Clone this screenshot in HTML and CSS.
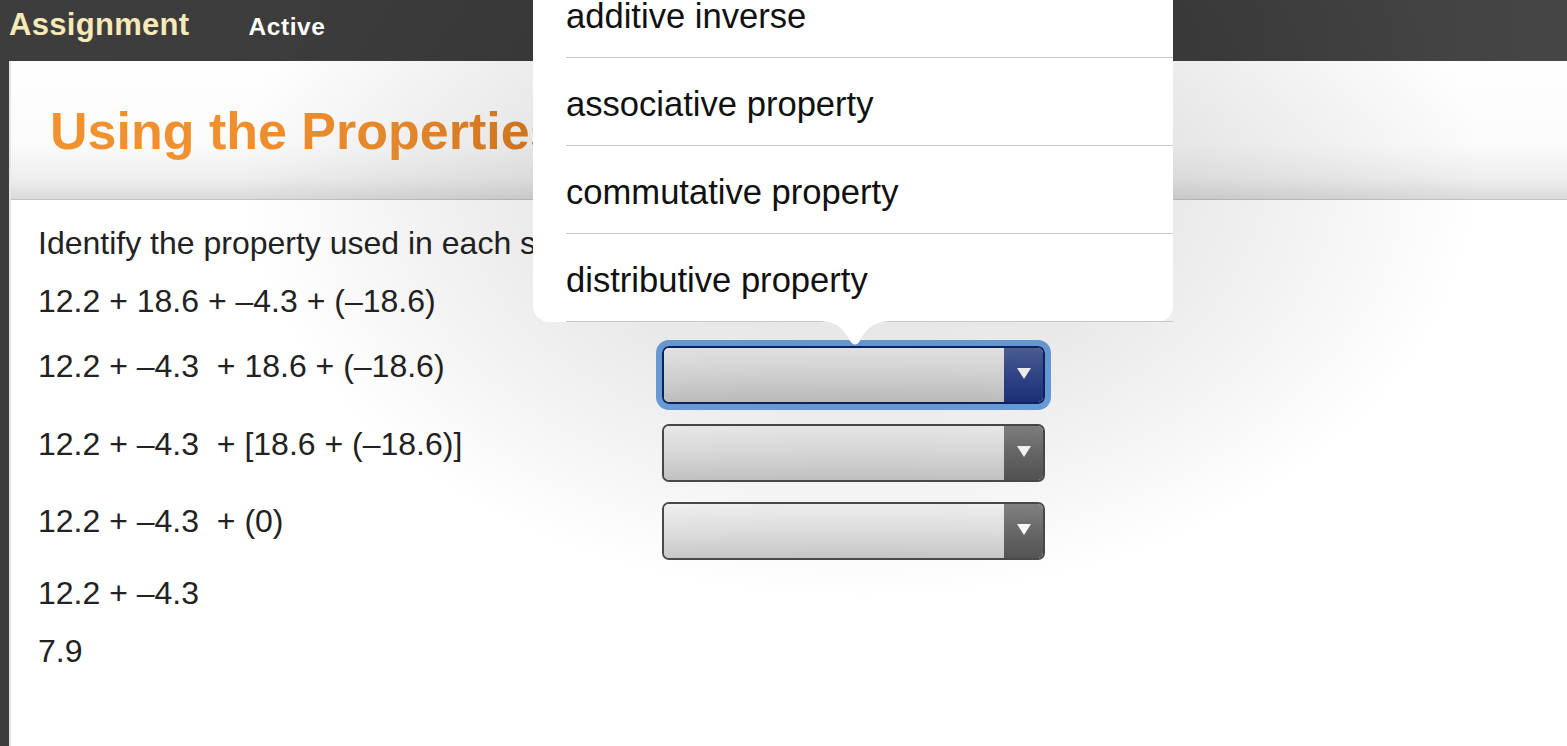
FILE: index.html
```html
<!DOCTYPE html>
<html lang="en">
<head>
<meta charset="utf-8">
<title>Assignment</title>
<link rel="stylesheet" href="styles.css">
</head>
<body>
  <header class="topbar">
    <span class="brand">Assignment</span>
    <span class="status">Active</span>
  </header>
  <main class="sheet">
    <div class="titlebar">
      <h1 class="title">Using the Properties</h1>
    </div>
    <section class="work">
      <p class="prompt">Identify the property used in each step.</p>
      <div class="row r1"><span class="expr">12.2 + 18.6 + –4.3 + (–18.6)</span></div>
      <div class="row r2">
        <span class="expr">12.2 + –4.3  + 18.6 + (–18.6)</span>
        <div class="select focused"><div class="select-field"></div><div class="select-btn"><span class="tri"></span></div></div>
      </div>
      <div class="row r3">
        <span class="expr">12.2 + –4.3  + [18.6 + (–18.6)]</span>
        <div class="select"><div class="select-field"></div><div class="select-btn"><span class="tri"></span></div></div>
      </div>
      <div class="row r4">
        <span class="expr">12.2 + –4.3  + (0)</span>
        <div class="select"><div class="select-field"></div><div class="select-btn"><span class="tri"></span></div></div>
      </div>
      <div class="row r5"><span class="expr">12.2 + –4.3</span></div>
      <div class="row r6"><span class="expr">7.9</span></div>
    </section>
  </main>

  <div class="scrim" aria-hidden="true"></div>

  <div class="popover">
    <ul class="options">
      <li class="option">additive inverse</li>
      <li class="option">associative property</li>
      <li class="option">commutative property</li>
      <li class="option">distributive property</li>
    </ul>
    <svg class="pointer" width="76" height="27" viewBox="0 0 76 27" aria-hidden="true">
      <path d="M0 0 C18 0 26 6 33 20 Q38 27 43 20 C50 6 58 0 76 0 Z" fill="#ffffff"/>
    </svg>
  </div>
</body>
</html>
```
FILE: styles.css
```css
* { box-sizing: border-box; }

html, body {
  margin: 0;
  padding: 0;
  height: 100%;
  overflow: hidden;
}

body {
  background: #3d3d3d;
  font-family: "Liberation Sans", Arial, Helvetica, sans-serif;
  color: #222;
  position: relative;
}

.topbar {
  height: 61px;
  background: linear-gradient(to right, #3d3d3d 0%, #3b3b3b 70%, #464646 100%);
  display: flex;
  align-items: center;
  padding-left: 9px;
  padding-bottom: 12px;
}

.brand {
  font-weight: bold;
  font-size: 31px;
  letter-spacing: 0.3px;
  color: #f8e9b8;
}

.status {
  font-weight: bold;
  font-size: 24.5px;
  letter-spacing: 0.6px;
  color: #ffffff;
  margin-left: 59px;
  margin-top: 4px;
}

.sheet {
  margin-left: 9px;
  background: #ffffff;
  border-left: 2px solid #e6e6e6;
  height: calc(100% - 61px);
}

.titlebar {
  height: 139px;
  background: linear-gradient(to bottom, #ffffff 0%, #fbfbfb 60%, #eeeeee 85%, #dadada 100%);
  border-bottom: 1px solid #c2c2c2;
  padding: 40px 0 0 39px;
}

.title {
  margin: 0;
  font-size: 52px;
  line-height: 60px;
  font-weight: bold;
  color: #f08f2e;
  background: linear-gradient(to right, #f2922f 0%, #ee8c2c 70%, #d97a1f 100%);
  -webkit-background-clip: text;
  background-clip: text;
  -webkit-text-fill-color: transparent;
  display: inline-block;
  white-space: nowrap;
}

.work {
  padding: 24px 0 0 27px;
}

.prompt {
  margin: 0 0 20px;
  font-size: 32px;
  line-height: 38px;
  white-space: nowrap;
}

.row {
  display: flex;
  align-items: flex-start;
}

.expr {
  width: 624px;
  font-size: 32px;
  line-height: 38px;
  white-space: pre;
}

.r1 { margin-bottom: 26px; }
.r2 { margin-bottom: 20px; }
.r2 .expr, .r3 .expr { padding-top: 1px; }
.r3 { margin-bottom: 20px; }
.r4 { margin-bottom: 14px; }
.r5 { margin-bottom: 20px; }

.select {
  width: 383px;
  height: 58px;
  border: 2px solid #4a4a4a;
  border-radius: 7px;
  display: flex;
  overflow: hidden;
}

.select-field {
  flex: 1;
  background: linear-gradient(to bottom, #f6f6f6 0%, #e2e2e2 50%, #c9c9c9 100%);
}

.select-btn {
  width: 39px;
  background: linear-gradient(to bottom, #858585 0%, #6a6a6a 50%, #555555 100%);
  display: flex;
  align-items: center;
  justify-content: center;
  padding-bottom: 3px;
}

.tri {
  width: 0;
  height: 0;
  border-left: 7px solid transparent;
  border-right: 7px solid transparent;
  border-top: 11px solid #ffffff;
}

.select.focused {
  border-color: #0e2565;
  box-shadow: 0 0 0 6px #6ea4e4;
}

.select.focused .select-btn {
  background: linear-gradient(to bottom, #52659f 0%, #34498f 50%, #1e3482 100%);
}

.scrim {
  position: absolute;
  inset: 0;
  pointer-events: none;
  background: radial-gradient(ellipse 620px 430px at 860px 170px,
    rgba(0, 0, 0, 0.10) 0%,
    rgba(0, 0, 0, 0.085) 50%,
    rgba(0, 0, 0, 0.04) 78%,
    rgba(0, 0, 0, 0) 100%);
}

.popover {
  position: absolute;
  left: 533px;
  top: -30px;
  width: 640px;
  height: 352px;
  background: #ffffff;
  border-radius: 0 0 16px 16px;
}

.options {
  list-style: none;
  margin: 0;
  padding: 0;
}

.option {
  margin-left: 33px;
  height: 88px;
  padding-top: 5px;
  border-bottom: 1px solid #c8c8c8;
  display: flex;
  align-items: center;
  font-size: 34.6px;
  color: #111;
}

.pointer {
  position: absolute;
  left: 284px;
  top: 351px;
  display: block;
}
```
